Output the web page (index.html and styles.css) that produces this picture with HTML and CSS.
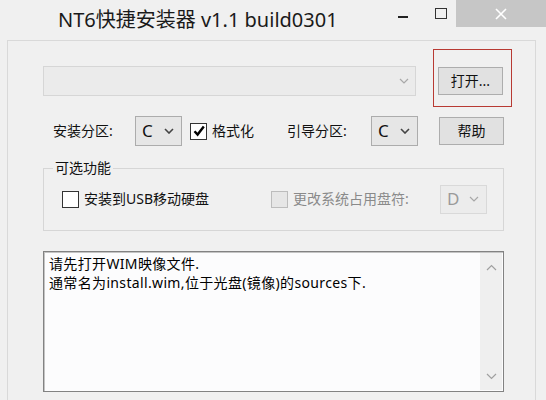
FILE: index.html
```html
<!DOCTYPE html>
<html lang="zh-CN">
<head>
<meta charset="utf-8">
<title>NT6快捷安装器 v1.1 build0301</title>
<link rel="stylesheet" href="styles.css">
</head>
<body>
<div class="window">
  <header class="titlebar">
    <div class="title">NT6快捷安装器 v1.1 build0301</div>
    <div class="controls">
      <div class="ctl ctl-min"><span class="min-bar"></span></div>
      <div class="ctl ctl-max"><span class="max-box"></span></div>
      <div class="ctl ctl-close">
        <svg width="12" height="12" viewBox="0 0 12 12"><path d="M1 1 L11 11 M11 1 L1 11" stroke="#fff" stroke-width="1.6" fill="none"/></svg>
      </div>
    </div>
  </header>
  <main class="panel">
    <div class="content">
      <div class="row row-file">
        <div class="combo combo-file">
          <svg class="chev" width="10" height="6" viewBox="0 0 10 6"><path d="M1 1 L5 5 L9 1" stroke="#a8a8a8" stroke-width="1.2" fill="none"/></svg>
        </div>
        <div class="btn-wrap">
          <button class="btn">打开...</button>
          <span class="highlight"></span>
        </div>
      </div>

      <div class="row row-part">
        <span class="lbl lbl-install">安装分区:</span>
        <div class="combo combo-small"><span class="combo-val">C</span>
          <svg class="chev" width="10" height="6" viewBox="0 0 10 6"><path d="M1 1 L5 5 L9 1" stroke="#444" stroke-width="1.6" fill="none"/></svg>
        </div>
        <span class="check checked">
          <svg width="14" height="14" viewBox="0 0 14 14"><path d="M2.5 7.2 L5.6 10.6 L11.8 2.6" stroke="#000" stroke-width="2.4" fill="none"/></svg>
        </span>
        <span class="lbl lbl-format">格式化</span>
        <div class="right-group">
          <span class="lbl lbl-boot">引导分区:</span>
          <div class="combo combo-small"><span class="combo-val">C</span>
            <svg class="chev" width="10" height="6" viewBox="0 0 10 6"><path d="M1 1 L5 5 L9 1" stroke="#444" stroke-width="1.6" fill="none"/></svg>
          </div>
          <button class="btn btn-help">帮助</button>
        </div>
      </div>

      <fieldset class="group">
        <legend class="legend">可选功能</legend>
        <div class="group-row">
          <div class="opt opt-usb">
            <span class="check"></span>
            <span class="lbl">安装到USB移动硬盘</span>
          </div>
          <div class="opt opt-letter">
            <span class="check disabled"></span>
            <span class="lbl lbl-disabled">更改系统占用盘符:</span>
          </div>
          <div class="combo combo-small combo-disabled"><span class="combo-val">D</span>
            <svg class="chev" width="10" height="6" viewBox="0 0 10 6"><path d="M1 1 L5 5 L9 1" stroke="#a8a8a8" stroke-width="1.2" fill="none"/></svg>
          </div>
        </div>
      </fieldset>

      <div class="log">
        <div class="log-text">
          <div>请先打开WIM映像文件.</div>
          <div>通常名为install.wim,位于光盘(镜像)的sources下.</div>
        </div>
        <div class="scrollbar">
          <svg width="11" height="7" viewBox="0 0 11 7"><path d="M1 6 L5.5 1.5 L10 6" stroke="#a0a0a0" stroke-width="1.2" fill="none"/></svg>
          <svg width="11" height="7" viewBox="0 0 11 7"><path d="M1 1 L5.5 5.5 L10 1" stroke="#a0a0a0" stroke-width="1.2" fill="none"/></svg>
        </div>
      </div>
    </div>
  </main>
</div>
</body>
</html>
```

FILE: styles.css
```css
* { box-sizing: border-box; }

html, body {
  margin: 0;
  padding: 0;
  width: 546px;
  height: 400px;
  overflow: hidden;
  background: #f0f0f0;
  font-family: "Noto Sans", "Noto Sans CJK SC", sans-serif;
  color: #111;
}

.window {
  display: flex;
  flex-direction: column;
  width: 546px;
}

/* Title bar */
.titlebar {
  display: flex;
  height: 40px;
  align-items: flex-start;
}

.title {
  margin-left: 58px;
  font-size: 20px;
  line-height: 40px;
  color: #1a1a1a;
  white-space: nowrap;
}

.controls {
  margin-left: auto;
  display: flex;
  height: 27px;
}

.ctl {
  display: flex;
  align-items: center;
  justify-content: center;
  height: 27px;
}

.ctl-min { width: 46px; }
.min-bar {
  display: block;
  width: 10px;
  height: 2px;
  background: #222;
  margin-top: 7px;
}

.ctl-max { width: 30px; }
.max-box {
  display: block;
  width: 12px;
  height: 11px;
  border: 1px solid #333;
  margin-top: -1px;
}

.ctl-close {
  width: 90px;
  background: #c6c6c6;
}

/* Client panel */
.panel {
  margin-left: 7px;
  margin-right: 10px;
  height: 380px;
  border: 1px solid #d9d9d9;
  border-bottom: none;
  background: #f0f0f0;
}

.content {
  display: flex;
  flex-direction: column;
  width: 496px;
  padding: 25px 0 0 35px;
}

.row {
  display: flex;
  align-items: center;
  height: 30px;
  width: 461px;
}

/* Combos */
.combo {
  position: relative;
  display: flex;
  align-items: center;
  height: 30px;
  border: 1px solid #d6d6d6;
  background: #ebebeb;
}

.combo-file {
  width: 373px;
  justify-content: flex-end;
  padding-right: 6px;
}

.combo-small {
  width: 47px;
  border-color: #acacac;
  background: #e6e6e6;
  padding: 0 7px 0 6px;
  justify-content: space-between;
}

.combo-val {
  font-size: 17px;
  line-height: 20px;
  color: #111;
}

.combo-disabled {
  height: 29px;
  border-color: #d9d9d9;
  background: #ececec;
}

.combo-disabled .combo-val { color: #9a9a9a; }

.chev { display: block; }

/* Buttons */
.btn {
  width: 65px;
  height: 28px;
  border: 1px solid #adadad;
  background: #e1e1e1;
  font-family: "Noto Sans", "Noto Sans CJK SC", sans-serif;
  font-size: 14px;
  line-height: 20px;
  color: #111;
  padding: 0;
}

.btn-wrap {
  position: relative;
  margin-left: 22px;
  display: flex;
}

.highlight {
  position: absolute;
  left: -5px;
  top: -18px;
  right: -9px;
  bottom: -12px;
  border: 1.5px solid #b83a33;
  pointer-events: none;
}

/* Row 2 */
.row-part { margin-top: 20px; }

.lbl {
  font-size: 14px;
  line-height: 20px;
  color: #111;
  white-space: nowrap;
}

.lbl-install {
  margin-left: 10px;
  width: 82px;
}

.check {
  display: inline-flex;
  align-items: center;
  justify-content: center;
  width: 17px;
  height: 17px;
  border: 1px solid #333;
  background: #fff;
  flex: none;
}

.row-part .check { margin-left: 8px; }
.lbl-format { margin-left: 5px; }

.check.disabled {
  border-color: #bcbcbc;
  background: #e6e6e6;
}

.right-group {
  margin-left: auto;
  display: flex;
  align-items: center;
}

.lbl-boot { width: 84px; }
.btn-help { margin-left: 21px; }

/* Group box */
.group {
  margin: 14px 0 0 0;
  width: 461px;
  padding: 8px 16px 16px 18px;
  border: 1px solid #d6d6d6;
  min-width: 0;
}

.legend {
  margin-left: -9px;
  padding: 0 2px;
  font-size: 14px;
  line-height: 16px;
  color: #111;
}

.group-row {
  display: flex;
  align-items: center;
  height: 30px;
}

.opt {
  display: flex;
  align-items: center;
  gap: 5px;
}

.opt-usb { width: 209px; }

.lbl-disabled { color: #8a8a8a; }

.group-row .combo { margin-left: auto; }

/* Log area */
.log {
  margin-top: 20px;
  width: 461px;
  height: 141px;
  display: flex;
  border: 1px solid #828282;
  box-shadow: inset 1px 1px 0 #c4c4c4;
  background: #fcfcfd;
}

.log-text {
  flex: 1;
  padding: 2px 0 0 5px;
  font-size: 14px;
  line-height: 19px;
  letter-spacing: 0.35px;
  color: #000;
  white-space: nowrap;
}

.scrollbar {
  width: 22px;
  margin: 1px 1px 1px 0;
  background: #efefef;
  display: flex;
  flex-direction: column;
  align-items: center;
  justify-content: space-between;
  padding: 11px 0 10px;
}

.scrollbar svg { display: block; }
```
